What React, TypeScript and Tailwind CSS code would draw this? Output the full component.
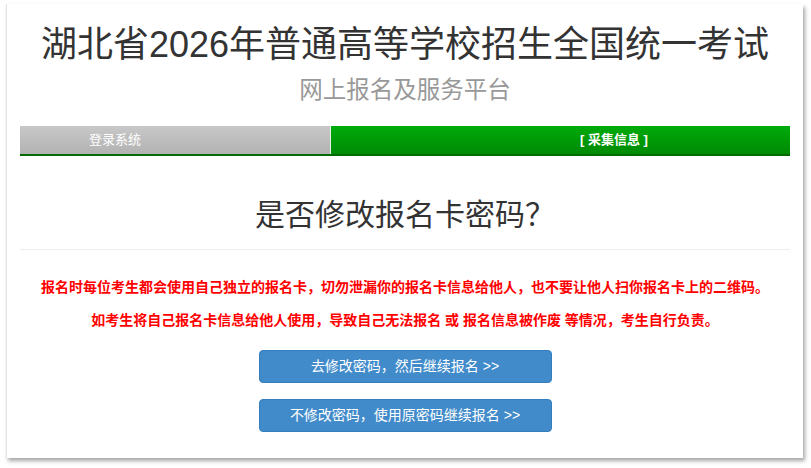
export default function App() {
  return (
    <div className="min-h-[468px] bg-white pt-[4px] pl-[6px]" style={{ fontFamily: '"Liberation Sans", "Noto Sans CJK SC", sans-serif' }}>
      <div className="w-[797px] h-[454px] bg-white shadow-[2px_3px_4px_rgba(0,0,0,0.35)] border-l border-[#e4e4e4] px-[13px] pt-[21px] pb-[25px]">
        <h1 className="text-center text-[36px] leading-[40px] text-[#333] whitespace-nowrap">湖北省2026年普通高等学校招生全国统一考试</h1>
        <h2 className="mt-[10px] text-center text-[23.5px] leading-[30px] text-[#999]">网上报名及服务平台</h2>

        <div className="mt-[21px] flex h-[30px] border-b-2 border-[#006a00]">
          <div className="w-[310px] bg-gradient-to-b from-[#c8c8c8] to-[#b2b2b2] text-white text-[13px] leading-[28px] pl-[69px]">登录系统</div>
          <div className="flex-1 border-l border-[#e8f0e8] bg-gradient-to-b from-[#00ab0a] to-[#008a05] text-white text-[13px] font-bold leading-[28px] pl-[249px]">[ 采集信息 ]</div>
        </div>

        <h3 className="mt-[41px] text-center text-[30px] leading-[36px] text-[#333]">是否修改报名卡密码？</h3>
        <div className="mt-[16px] border-t border-[#eeeeee]" />

        <p className="mt-[27px] text-center text-[14px] leading-[20px] font-bold text-[#ff0000]">报名时每位考生都会使用自己独立的报名卡，切勿泄漏你的报名卡信息给他人，也不要让他人扫你报名卡上的二维码。</p>
        <p className="mt-[13px] text-center text-[14px] leading-[20px] font-bold text-[#ff0000]">如考生将自己报名卡信息给他人使用，导致自己无法报名 或 报名信息被作废 等情况，考生自行负责。</p>

        <div className="mt-[20px] flex flex-col items-center gap-[16px]">
          <button className="w-[293px] h-[33px] rounded-[4px] bg-[#428bca] border border-[#357ebd] text-white text-[14px]">去修改密码，然后继续报名 &gt;&gt;</button>
          <button className="w-[293px] h-[33px] rounded-[4px] bg-[#428bca] border border-[#357ebd] text-white text-[14px]">不修改密码，使用原密码继续报名 &gt;&gt;</button>
        </div>
      </div>
    </div>
  );
}
